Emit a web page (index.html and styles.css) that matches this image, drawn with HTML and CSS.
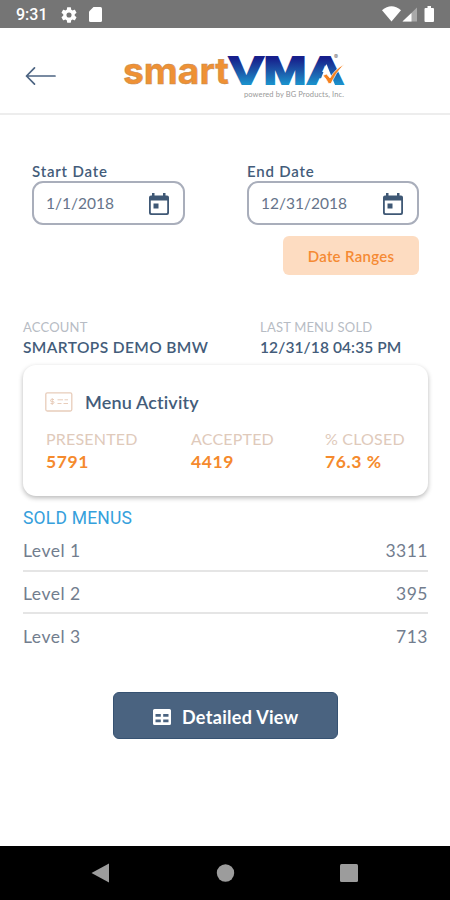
FILE: index.html
```html
<!DOCTYPE html>
<html lang="en">
<head>
  <meta charset="UTF-8">
  <meta name="viewport" content="width=device-width, initial-scale=1.0">
  <title>smartVMA - Menu Activity</title>
  <link rel="stylesheet" href="styles.css">
</head>
<body>
  <div class="status-bar">
    <span class="clock">9:31</span>
    <svg class="gear" width="16" height="16" viewBox="2 2 20 20"><path fill="#fff" d="M19.14 12.94c.04-.3.06-.61.06-.94 0-.32-.02-.64-.07-.94l2.03-1.58c.18-.14.23-.41.12-.61l-1.92-3.32c-.12-.22-.37-.29-.59-.22l-2.39.96c-.5-.38-1.03-.7-1.62-.94l-.36-2.54c-.04-.24-.24-.41-.48-.41h-3.84c-.24 0-.43.17-.47.41l-.36 2.54c-.59.24-1.13.57-1.62.94l-2.39-.96c-.22-.08-.47 0-.59.22L2.74 8.87c-.12.21-.08.47.12.61l2.03 1.58c-.05.3-.09.63-.09.94s.02.64.07.94l-2.03 1.58c-.18.14-.23.41-.12.61l1.92 3.32c.12.22.37.29.59.22l2.39-.96c.5.38 1.03.7 1.62.94l.36 2.54c.05.24.24.41.48.41h3.84c.24 0 .44-.17.47-.41l.36-2.54c.59-.24 1.13-.56 1.62-.94l2.39.96c.22.08.47 0 .59-.22l1.92-3.32c.12-.22.07-.47-.12-.61l-2.01-1.58zM12 15.2A3.2 3.2 0 1 1 12 8.8a3.2 3.2 0 0 1 0 6.4z"/></svg>
    <svg class="sd" width="13" height="15" viewBox="0 0 13 15"><path fill="#fff" d="M4.5 0H11.500a1.500 1.500 0 0 1 1.500 1.500V13.500a1.500 1.500 0 0 1-1.500 1.500H1.500A1.500 1.500 0 0 1 0 13.500V4.500z"/></svg>
    <svg class="signals" width="54" height="17" viewBox="0 0 54 17">
      <path fill="#fff" d="M0 4.200Q9.500-3.500 19 4.200L9.500 15.500z"/>
      <path fill="#a9a9a9" d="M35 1.500V15.500H20.500z"/>
      <path fill="#fff" d="M29.500 7V15.500H20.500z"/>
      <path fill="#fff" d="M45.500 0h3.500v2h2q1 0 1 1V15q0 1-1 1H43.500q-1 0-1-1V3q0-1 1-1h2z"/>
    </svg>
  </div>

  <header class="header">
    <svg class="back" width="32" height="20" viewBox="0 0 32 20" fill="none" stroke="#4c6482" stroke-width="1.700" stroke-linecap="round" stroke-linejoin="round"><path d="M30 10H1.500M9.500 1.800L1.500 10l8 8.200"/></svg>
    <svg class="logo" width="230" height="60" viewBox="0 -10 230 60">
      <defs>
        <linearGradient id="vma" x1="0" y1="0" x2="0" y2="1">
          <stop offset="0.200" stop-color="#17208c"/>
          <stop offset="0.500" stop-color="#1c56a8"/>
          <stop offset="0.800" stop-color="#1b8fca"/>
        </linearGradient>
      </defs>
      <text class="logo-smart" x="1" y="32" textLength="106" lengthAdjust="spacingAndGlyphs">smart</text>
      <text class="logo-vma" x="107" y="32" textLength="115" lengthAdjust="spacingAndGlyphs">VMA</text>
      <path d="M204.500 12l8.500 21h-16.500z" fill="#fff"/>
      <path d="M201 23.500l3.500-1.500 3.500 4q5-9 14-13.500-9 9-13 19h-2.500q-2-4.500-5.500-8z" fill="#f58220" stroke="#fff" stroke-width="0.700"/>
      <text class="logo-r" x="212" y="7">®</text>
      <text class="logo-tag" x="122" y="44.500" textLength="100">powered by BG Products, Inc.</text>
    </svg>
  </header>

  <main class="content">
    <section class="dates">
      <div class="field start">
        <label>Start Date</label>
        <div class="date-box">
          <span>1/1/2018</span>
          <svg width="22" height="24" viewBox="0 0 22 24"><path fill="#3f5875" d="M4 1h2.500v2.500h8.500V1h2.500v2.500h1.500q2 0 2 2V21q0 2-2 2H3q-2 0-2-2V5.500q0-2 2-2h1zM2.800 8.500V20.200q0 1 1 1h14.400q1 0 1-1V8.500zM5.500 11.500h5v5h-5z"/></svg>
        </div>
      </div>
      <div class="field end">
        <label>End Date</label>
        <div class="date-box">
          <span>12/31/2018</span>
          <svg width="22" height="24" viewBox="0 0 22 24"><path fill="#3f5875" d="M4 1h2.500v2.500h8.500V1h2.500v2.500h1.500q2 0 2 2V21q0 2-2 2H3q-2 0-2-2V5.500q0-2 2-2h1zM2.800 8.500V20.200q0 1 1 1h14.400q1 0 1-1V8.500zM5.500 11.500h5v5h-5z"/></svg>
        </div>
        <button class="ranges">Date Ranges</button>
      </div>
    </section>

    <section class="account">
      <div>
        <div class="info-label">ACCOUNT</div>
        <div class="info-value account-name">SMARTOPS DEMO BMW</div>
      </div>
      <div>
        <div class="info-label">LAST MENU SOLD</div>
        <div class="info-value">12/31/18 04:35 PM</div>
      </div>
    </section>

    <section class="card">
      <div class="card-title">
        <svg width="28" height="20" viewBox="0 0 28 20" fill="none" stroke="#e8cdbb" stroke-width="1.300"><rect x="0.800" y="0.800" width="26" height="18.200" rx="1.500"/><path stroke-width="1" d="M9 7.500H6.500q-1 0-1 1t1 1h1.500q1 0 1 1t-1 1H5.500M7.200 6v7M12.500 7.800h5.500M19.500 7.800h3.500M12.500 11.500h4M18.500 11.500h4.500"/></svg>
        <h2>Menu Activity</h2>
      </div>
      <div class="stats">
        <div><div class="stat-label">PRESENTED</div><div class="stat-value">5791</div></div>
        <div><div class="stat-label">ACCEPTED</div><div class="stat-value">4419</div></div>
        <div><div class="stat-label">% CLOSED</div><div class="stat-value">76.3 %</div></div>
      </div>
    </section>

    <h3 class="sold">SOLD MENUS</h3>
    <ul class="levels">
      <li><span>Level 1</span><span>3311</span></li>
      <li><span>Level 2</span><span>395</span></li>
      <li><span>Level 3</span><span>713</span></li>
    </ul>

    <button class="detailed">
      <svg width="18" height="16" viewBox="0 0 18 16"><path fill="#fff" fill-rule="evenodd" d="M1.500 0h15Q18 0 18 1.500v13q0 1.500-1.500 1.500h-15Q0 16 0 14.500v-13Q0 0 1.500 0zM2.500 5v2.800h5.300V5zM10.200 5v2.800h5.300V5zM2.500 10.500v2.800h5.300v-2.800zM10.200 10.500v2.800h5.300v-2.800z"/></svg>
      <span>Detailed View</span>
    </button>
  </main>

  <nav class="nav-bar">
    <svg width="20" height="20" viewBox="0 0 20 20"><path fill="#9c9c9c" d="M18 .5v19L.5 10z"/></svg>
    <svg width="20" height="20" viewBox="0 0 20 20"><circle cx="10.500" cy="10" r="8.700" fill="#9c9c9c"/></svg>
    <svg width="20" height="20" viewBox="0 0 20 20"><rect x="1" y="1" width="18" height="18" rx="1.500" fill="#9c9c9c"/></svg>
  </nav>
</body>
</html>
```
FILE: styles.css
```css
* {
  box-sizing: border-box;
}
body {
  margin: 0;
  height: 900px;
  display: flex;
  flex-direction: column;
  overflow: hidden;
  background-color: #fff;
  font-family: Lato, "Noto Sans", sans-serif;
  color: #435c7a;
}
h2, h3, ul {
  margin: 0;
  padding: 0;
}
button {
  border: 0;
  padding: 0;
  font-family: inherit;
}
svg {
  display: block;
  flex: none;
}
.status-bar {
  height: 28px;
  flex: none;
  display: flex;
  align-items: center;
  padding: 1px 14px 0 16px;
  background-color: #757575;
}
.clock {
  width: 45px;
  font: 500 16px Roboto, sans-serif;
  color: #fff;
}
.sd {
  margin-left: 12px;
}
.signals {
  margin-left: auto;
}
.header {
  height: 87px;
  flex: none;
  display: flex;
  padding: 14px 0 0 25px;
  border-bottom: 2px solid #ededed;
}
.back {
  margin-top: 24px;
}
.logo {
  margin-left: 65px;
}
.logo-smart {
  font: 700 37px Inter, sans-serif;
  fill: #ef9135;
  stroke: #c58a4f;
  stroke-width: 0.5px;
}
.logo-vma {
  font: 700 38px "Liberation Sans", sans-serif;
  fill: url(#vma);
  stroke: url(#vma);
  stroke-width: 2px;
}
.logo-r {
  font: 6px Inter, sans-serif;
  fill: #666;
}
.logo-tag {
  font: 400 7.5px Lato, sans-serif;
  fill: #999;
}
.content {
  flex: 1;
  padding: 48px 22px 0 23px;
}
.dates {
  display: flex;
  justify-content: space-between;
  padding: 0 9px;
}
.start {
  width: 153px;
}
.end {
  width: 172px;
}
.field label {
  display: block;
  height: 18px;
  font-size: 15px;
  line-height: 16px;
  font-weight: 600;
  letter-spacing: 0.8px;
}
.date-box {
  height: 44px;
  display: flex;
  align-items: center;
  justify-content: space-between;
  padding: 0 13px 0 12px;
  border: 2px solid #a9aebb;
  border-radius: 11px;
  font-size: 15.5px;
  color: #66748a;
}
.date-box svg {
  margin-top: 1px;
}
.ranges {
  display: block;
  width: 136px;
  height: 39px;
  margin: 11px 0 0 auto;
  border-radius: 6px;
  background-color: #fddcc1;
  color: #f58a33;
  font-size: 15px;
  font-weight: 600;
  letter-spacing: 0.3px;
}
.account {
  display: grid;
  grid-template-columns: 237px 1fr;
  padding-top: 42px;
  white-space: nowrap;
}
.info-label {
  height: 19px;
  font-size: 13px;
  line-height: 20px;
  letter-spacing: 0.2px;
  color: #b7bcc4;
}
.info-value {
  height: 21px;
  font-size: 15.5px;
  line-height: 22px;
  font-weight: 600;
  letter-spacing: 0.1px;
}
.account-name {
  letter-spacing: 0.4px;
}
.card {
  height: 131px;
  margin-top: 8px;
  padding: 26px 22px 0;
  border-radius: 13px;
  background-color: #fff;
  box-shadow: 0 2px 5px rgba(0, 0, 0, 0.28);
}
.card-title {
  display: flex;
  align-items: center;
  gap: 12px;
  height: 22px;
}
.card-title h2 {
  font-size: 18px;
  font-weight: 600;
  letter-spacing: 0.15px;
}
.stats {
  display: grid;
  grid-template-columns: 145px 134px 1fr;
  margin: 14px 0 0 1px;
  white-space: nowrap;
}
.stat-label {
  height: 23px;
  font-size: 16px;
  line-height: 23px;
  letter-spacing: 0.2px;
  color: #e0cabb;
}
.stat-value {
  font-size: 17.5px;
  line-height: 23px;
  font-weight: 700;
  letter-spacing: 0.6px;
  color: #f58a2d;
}
.sold {
  padding-top: 12px;
  height: 33px;
  font: 400 17.5px/20px Roboto, sans-serif;
  letter-spacing: 0.2px;
  color: #35a0dc;
}
.levels {
  list-style: none;
}
.levels li {
  display: flex;
  justify-content: space-between;
  align-items: center;
  height: 42.500px;
  padding-top: 3px;
  border-bottom: 2px solid #e5e5e5;
  font-size: 17.5px;
  letter-spacing: 0.5px;
  color: #727d8e;
}
.levels li:last-child {
  border: 0;
}
.detailed {
  display: flex;
  align-items: center;
  gap: 11px;
  width: 225px;
  height: 47px;
  margin: 35px 0 0 90px;
  padding: 3px 0 0 39px;
  border: 1px solid #365272;
  border-radius: 6px;
  background-color: #4a6380;
  color: #fff;
  font-size: 18px;
  font-weight: 700;
  letter-spacing: 0.3px;
}
.nav-bar {
  height: 54px;
  flex: none;
  display: flex;
  justify-content: space-between;
  padding: 17px 91px 0 91px;
  background-color: #000;
}
```
